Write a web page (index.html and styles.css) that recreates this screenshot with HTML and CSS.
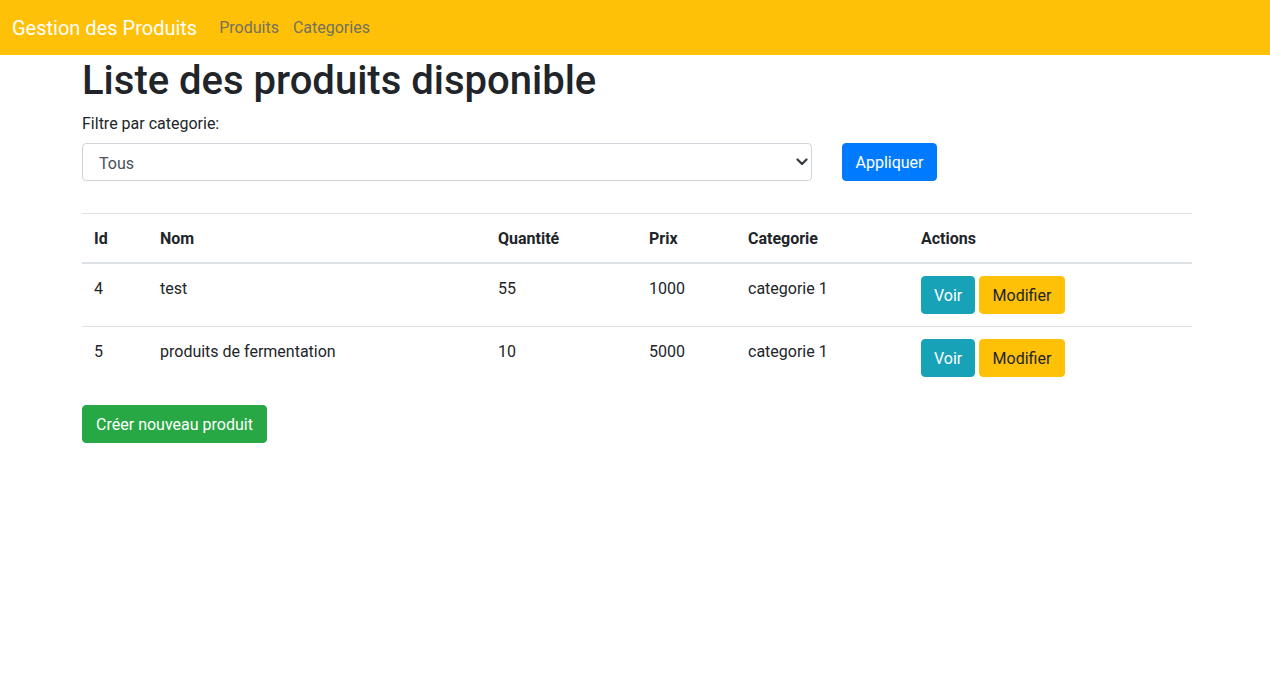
FILE: index.html
```html
<!DOCTYPE html>
<html lang="fr">
<head>
<meta charset="utf-8">
<title>Gestion des Produits</title>
<link rel="stylesheet" href="styles.css">
</head>
<body>
<nav class="navbar">
  <a class="brand" href="#">Gestion des Produits</a>
  <a class="nav-link" href="#">Produits</a>
  <a class="nav-link" href="#">Categories</a>
</nav>
<main class="container">
  <h1 class="title">Liste des produits disponible</h1>
  <form class="filter">
    <label class="filter-label" for="cat">Filtre par categorie:</label>
    <div class="filter-row">
      <div class="select-wrap">
        <select id="cat" class="select">
          <option>Tous</option>
          <option>categorie 1</option>
        </select>
        <svg class="chevron" width="12" height="8" viewBox="0 0 12 8"><path d="M1.5 1.5 L6 6 L10.5 1.5" fill="none" stroke="#343a40" stroke-width="2.2" stroke-linecap="round" stroke-linejoin="round"/></svg>
      </div>
      <button type="button" class="btn btn-primary">Appliquer</button>
    </div>
  </form>
  <table class="table">
    <colgroup>
      <col style="width:66px"><col style="width:338px"><col style="width:151px"><col style="width:99px"><col style="width:173px"><col>
    </colgroup>
    <thead>
      <tr><th>Id</th><th>Nom</th><th>Quantité</th><th>Prix</th><th>Categorie</th><th>Actions</th></tr>
    </thead>
    <tbody>
      <tr>
        <td>4</td><td>test</td><td>55</td><td>1000</td><td>categorie 1</td>
        <td><div class="actions"><a class="btn btn-info" href="#">Voir</a><a class="btn btn-warning" href="#">Modifier</a></div></td>
      </tr>
      <tr>
        <td>5</td><td>produits de fermentation</td><td>10</td><td>5000</td><td>categorie 1</td>
        <td><div class="actions"><a class="btn btn-info" href="#">Voir</a><a class="btn btn-warning" href="#">Modifier</a></div></td>
      </tr>
    </tbody>
  </table>
  <a class="btn btn-success" href="#">Créer nouveau produit</a>
</main>
</body>
</html>
```
FILE: styles.css
```css
* { box-sizing: border-box; }
body {
  margin: 0;
  font-family: Roboto, "Noto Sans", sans-serif;
  font-size: 16px;
  line-height: 24px;
  color: #212529;
  background: #fff;
}
a { text-decoration: none; }

.navbar {
  display: flex;
  align-items: center;
  height: 55px;
  padding: 0 12px 0 12px;
  background: #ffc107;
}
.brand {
  font-size: 20px;
  line-height: 30px;
  color: #fff;
  margin-right: 15px;
}
.nav-link {
  padding: 1px 7px 0;
  color: #75705f;
  font-size: 16px;
}

.container {
  width: 1110px;
  margin-left: 82px;
}
.title {
  margin: 0 0 6px;
  padding-top: 2px;
  font-size: 40px;
  line-height: 48px;
  font-weight: 500;
}
.filter-label {
  display: block;
  padding-top: 1px;
  line-height: 23px;
  margin-bottom: 8px;
}
.filter-row {
  display: flex;
  gap: 30px;
  margin-bottom: 32px;
}
.select-wrap {
  position: relative;
  width: 730px;
}
.select {
  appearance: none;
  -webkit-appearance: none;
  width: 100%;
  height: 38px;
  padding: 7px 16px 5px;
  font-family: inherit;
  font-size: 16px;
  color: #495057;
  background: #fff;
  border: 1px solid #ced4da;
  border-radius: 4px;
}
.chevron {
  position: absolute;
  right: 4px;
  top: 15px;
  pointer-events: none;
}

.btn {
  display: inline-block;
  height: 38px;
  padding: 7px 12px 5px;
  font-family: inherit;
  font-size: 16px;
  line-height: 24px;
  text-align: center;
  border: 1px solid transparent;
  border-radius: 4px;
  cursor: pointer;
  white-space: nowrap;
}
.btn-primary { background: #007bff; border-color: #007bff; color: #fff; width: 95px; }
.btn-info { background: #17a2b8; border-color: #17a2b8; color: #fff; width: 54px; }
.btn-warning { background: #ffc107; border-color: #ffc107; color: #212529; width: 86px; }
.btn-success { background: #28a745; border-color: #28a745; color: #fff; width: 185px; }

.table {
  width: 1110px;
  table-layout: fixed;
  border-collapse: collapse;
  margin-bottom: 16px;
}
.table th, .table td {
  padding: 13px 12px 11px;
  text-align: left;
  vertical-align: top;
  border-top: 1px solid #dee2e6;
}
.table tbody td:last-child { padding-top: 12px; padding-bottom: 12px; }
.table th { font-weight: 700; }
.table thead th { border-bottom: 2px solid #dee2e6; }
.actions {
  display: flex;
  gap: 4px;
}
```
